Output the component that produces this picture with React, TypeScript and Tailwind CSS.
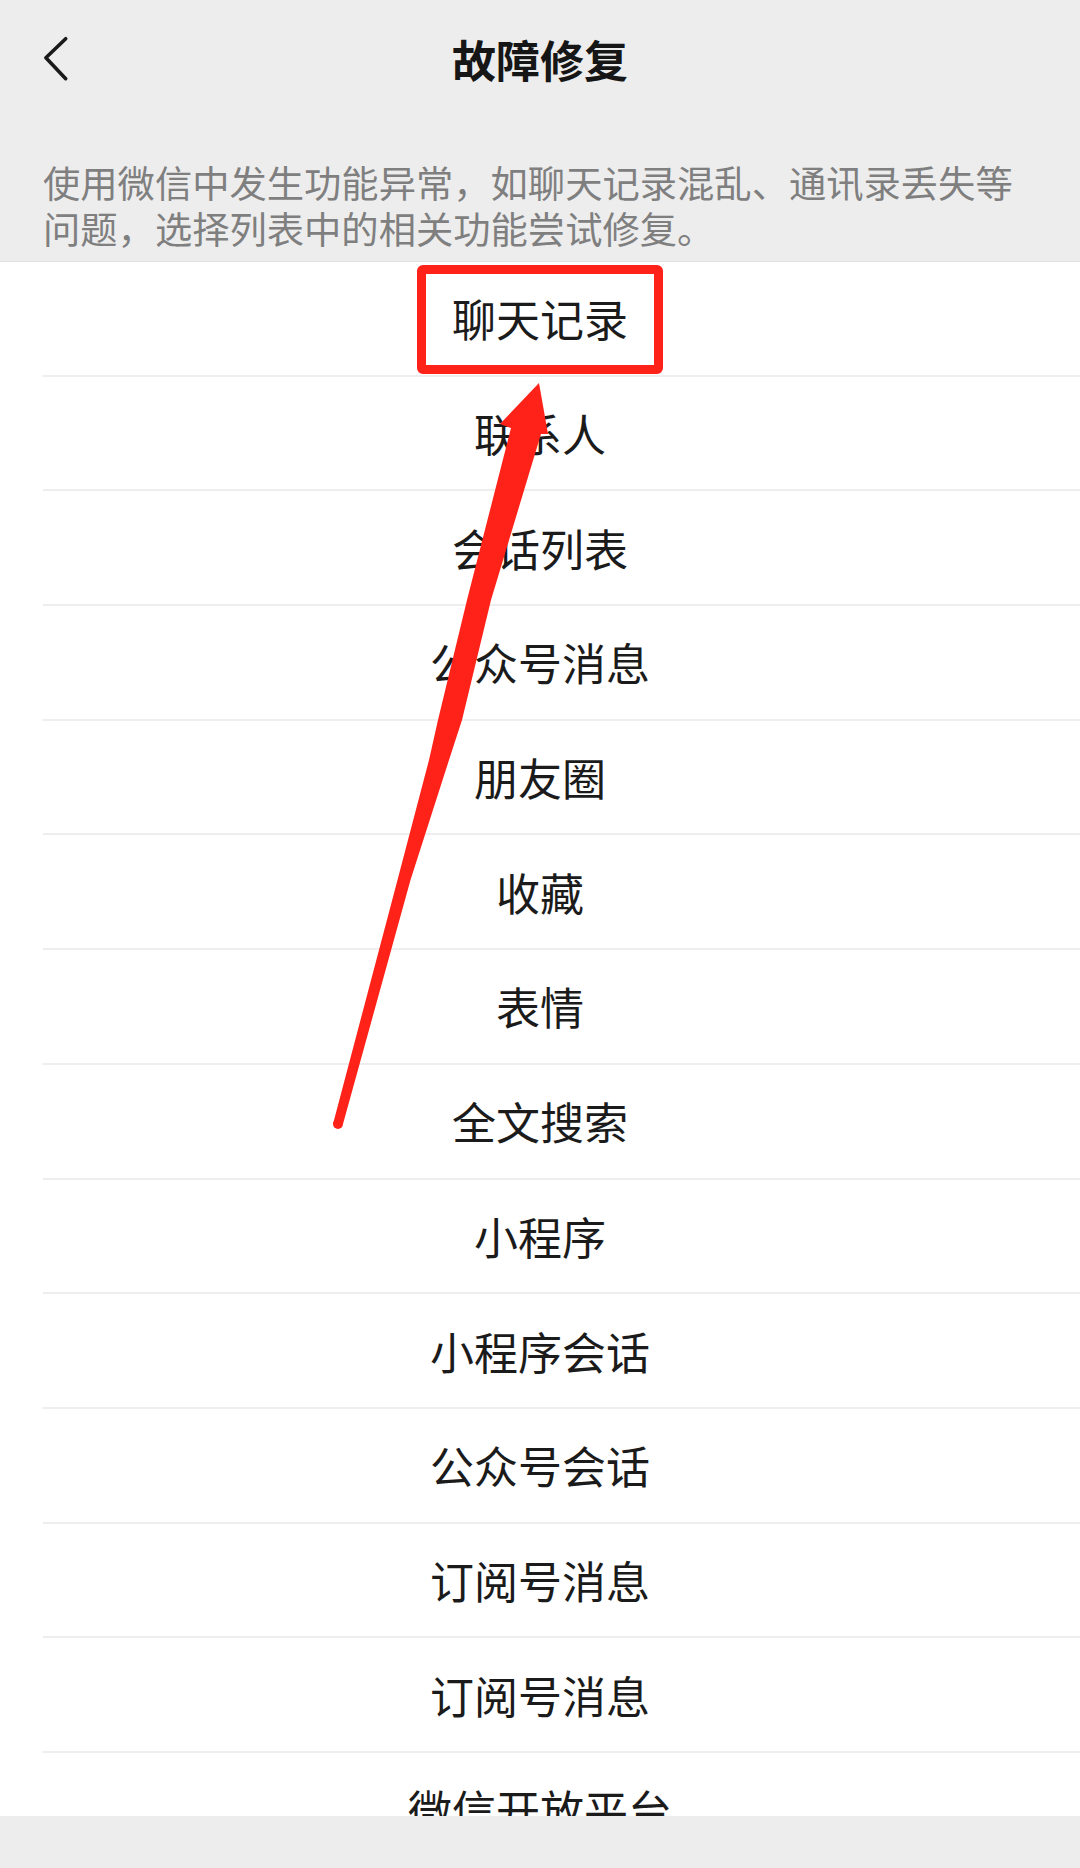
import React from "react";

const items = [
  "聊天记录",
  "联系人",
  "会话列表",
  "公众号消息",
  "朋友圈",
  "收藏",
  "表情",
  "全文搜索",
  "小程序",
  "小程序会话",
  "公众号会话",
  "订阅号消息",
  "订阅号消息",
  "微信开放平台",
];

const font = { fontFamily: '"Noto Sans CJK SC", "Noto Sans", sans-serif' };

export default function App() {
  return (
    <div
      className="relative w-[1080px] h-[1868px] overflow-hidden bg-[#ededed] flex flex-col"
      style={font}
    >
      {/* Nav bar */}
      <div className="h-[118px] shrink-0 grid grid-cols-[1fr_auto_1fr] items-center">
        <div className="pl-[42px] flex items-center">
          <svg width="28" height="48" viewBox="0 0 28 48" fill="none">
            <path
              d="M23.7 3.7 L3.9 22.7 L23.7 43.7"
              stroke="#1a1a1a"
              strokeWidth="3.6"
              strokeLinecap="round"
              strokeLinejoin="round"
            />
          </svg>
        </div>
        <div className="text-[44px] leading-none font-semibold text-[#161616] text-center">
          故障修复
        </div>
        <div />
      </div>

      {/* Description */}
      <div className="shrink-0 h-[144px] pt-[41px] pl-[43px] pr-[20px] border-b border-[#e2e2e2] text-[37.3px] leading-[46px] text-[#7f7f7f]">
        <div className="whitespace-nowrap">使用微信中发生功能异常，如聊天记录混乱、通讯录丢失等</div>
        <div className="whitespace-nowrap">问题，选择列表中的相关功能尝试修复。</div>
      </div>

      {/* List */}
      <div className="shrink-0 h-[1554px] overflow-hidden bg-white flex flex-col">
        {items.map((t, i) => (
          <div key={i} className="shrink-0 flex flex-col">
            <div className="h-[112.7px] flex items-center justify-center text-[44px] leading-none text-[#1b1b1b]">
              {t}
            </div>
            <div className="ml-[43px] h-[2px] bg-[#eeeeee]" />
          </div>
        ))}
      </div>

      {/* Bottom bar */}
      <div className="flex-1 bg-[#ededed]" />

      {/* Red highlight box (annotation overlay) */}
      <div className="absolute left-[417px] top-[265px] w-[246px] h-[109px] border-[9px] border-[#fe2219] rounded-[6px]" />

      {/* Red arrow (annotation overlay) */}
      <svg
        className="absolute left-0 top-0 pointer-events-none"
        width="1080"
        height="1868"
        viewBox="0 0 1080 1868"
      >
        <polygon
          fill="#fe2219"
          points="539,383 548,434 541,434 491,600 462,720 449,760 410.5,880 343,1124 333,1124 397.5,880 429,760 438,720 467,600 511,428 500,424"
        />
        <circle cx="338" cy="1124" r="5" fill="#fe2219" />
      </svg>
    </div>
  );
}
